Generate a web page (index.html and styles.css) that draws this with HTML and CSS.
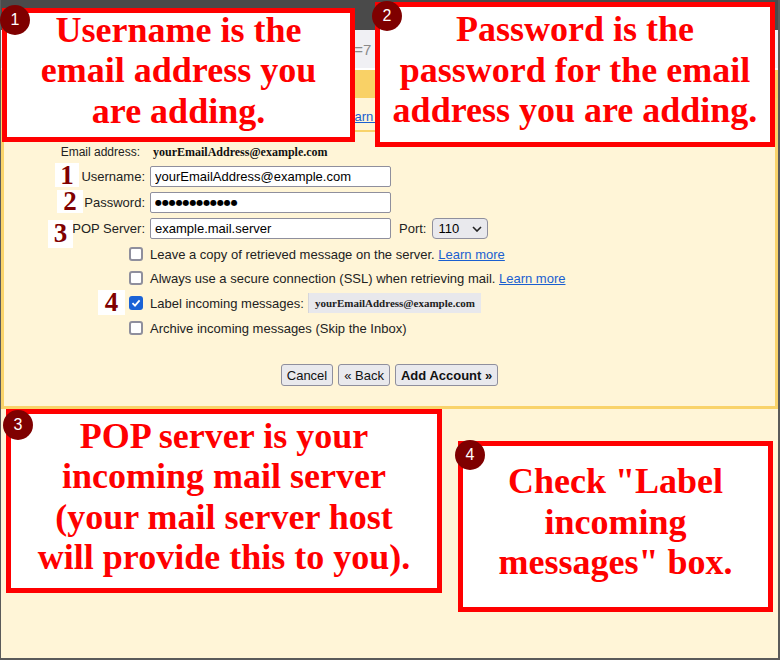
FILE: index.html
```html
<!DOCTYPE html>
<html lang="en">
<head>
<meta charset="utf-8">
<title>Add a mail account - POP settings</title>
<link rel="stylesheet" href="styles.css">
</head>
<body>
<div class="window">
  <div class="topbar"></div>
  <div class="urlbar"><span class="url">t=7</span></div>
  <div class="dialog-head"></div>
  <div class="panel">
    <div class="intro"><a class="link" href="#">Learn more</a></div>
    <div class="form">
      <div class="grid">
        <div class="lbl email-lbl">Email address:</div>
        <div class="email-val">yourEmailAddress@example.com</div>

        <label class="lbl" for="user">Username:</label>
        <div class="ctl"><input id="user" class="field" type="text" value="yourEmailAddress@example.com"></div>

        <label class="lbl" for="pass">Password:</label>
        <div class="ctl"><input id="pass" class="field pw" type="text" value="●●●●●●●●●●●●"></div>

        <label class="lbl" for="pop">POP Server:</label>
        <div class="ctl">
          <input id="pop" class="field" type="text" value="example.mail.server">
          <label class="port-lbl" for="port">Port:</label>
          <span class="sel-wrap">
            <select id="port" class="sel"><option>110</option><option>995</option></select>
            <svg class="chev" width="10" height="6" viewBox="0 0 10 6"><polyline points="1,1 5,5 9,1" fill="none" stroke="#222" stroke-width="1.6"/></svg>
          </span>
        </div>
      </div>

      <div class="opts">
        <div class="opt"><span class="cb"></span><span>Leave a copy of retrieved message on the server. <a class="link" href="#">Learn more</a></span></div>
        <div class="opt"><span class="cb"></span><span>Always use a secure connection (SSL) when retrieving mail. <a class="link" href="#">Learn more</a></span></div>
        <div class="opt opt-label"><span class="cb on"><svg width="10" height="10" viewBox="0 0 10 10"><polyline points="1.5,5.2 4,7.6 8.6,2.4" fill="none" stroke="#fff" stroke-width="1.8"/></svg></span><span>Label incoming messages:</span><span class="chip">yourEmailAddress@example.com</span></div>
        <div class="opt"><span class="cb"></span><span>Archive incoming messages (Skip the Inbox)</span></div>
      </div>

      <div class="actions">
        <button class="btn" type="button">Cancel</button>
        <button class="btn" type="button">« Back</button>
        <button class="btn primary" type="button">Add Account »</button>
      </div>
    </div>
  </div>

  <span class="mk mk1">1</span>
  <span class="mk mk2">2</span>
  <span class="mk mk3">3</span>
  <span class="mk mk4">4</span>

  <div class="callout c1"><p>Username is the<br>email address you<br>are adding.</p></div>
  <div class="callout c2"><p>Password is the<br>password for the email<br>address you are adding.</p></div>
  <div class="callout c3"><p>POP server is your<br>incoming mail server<br>(your mail server host<br>will provide this to you).</p></div>
  <div class="callout c4"><p>Check "Label<br>incoming<br>messages" box.</p></div>

  <span class="badge b1">1</span>
  <span class="badge b2">2</span>
  <span class="badge b3">3</span>
  <span class="badge b4">4</span>
</div>
</body>
</html>
```

FILE: styles.css
```css
html, body {
  margin: 0;
  padding: 0;
}
body {
  width: 780px;
  height: 660px;
  overflow: hidden;
  font-family: "Liberation Sans", Arial, sans-serif;
  color: #222;
}
.window {
  position: relative;
  box-sizing: border-box;
  width: 780px;
  height: 660px;
  border-left: 1px solid #5a5a5a;
  border-right: 2px solid #5a5a5a;
  border-bottom: 2px solid #5a5a5a;
  background: #fff5d7;
  display: flex;
  flex-direction: column;
}
.topbar {
  flex: none;
  height: 30px;
  background: #4a4a4a;
}
.urlbar {
  flex: none;
  height: 38px;
  background: #f0f0f4;
  border-bottom: 2px solid #ffffff;
  display: flex;
  align-items: center;
}
.url {
  padding-left: 349px;
  font-size: 15px;
  color: #8a8a8a;
}
.dialog-head {
  flex: none;
  height: 28px;
  background: #f9d166;
}
.panel {
  flex: none;
  border: 3px solid #f9d36a;
  border-top: none;
  background: #fff5d7;
}
.intro {
  box-sizing: border-box;
  height: 34px;
  padding: 11px 0 0 336px;
  border-bottom: 2px solid #f9d36a;
  font-size: 13px;
  line-height: 16px;
}
.link {
  color: #1a5fd0;
  text-decoration: underline;
}
.form {
  padding: 12px 0 20px;
  font-size: 13px;
}
.grid {
  display: grid;
  grid-template-columns: 141px auto;
  column-gap: 5px;
  row-gap: 5px;
  align-items: center;
}
.lbl {
  text-align: right;
  font-size: 13px;
  color: #222;
  white-space: nowrap;
}
.email-lbl {
  font-size: 12px;
  line-height: 16px;
  padding-right: 5px;
  margin-bottom: 1px;
}
.email-val {
  padding-left: 3px;
  margin-bottom: 1px;
  font-family: "Liberation Serif", "Times New Roman", serif;
  font-weight: bold;
  font-size: 12px;
  line-height: 16px;
  color: #111;
}
.ctl {
  display: flex;
  align-items: center;
}
.field {
  box-sizing: border-box;
  width: 241px;
  height: 21px;
  margin: 0;
  padding: 0 4px;
  border: 1px solid #8f8f9d;
  border-radius: 2px;
  background: #fff;
  font-family: "Liberation Sans", Arial, sans-serif;
  font-size: 13px;
  color: #000;
  outline: none;
}
.pw {
  font-family: "DejaVu Sans", sans-serif;
  font-size: 8px;
  letter-spacing: -0.1px;
}
.port-lbl {
  margin-left: 8px;
  font-size: 13px;
}
.sel-wrap {
  position: relative;
  display: inline-flex;
  margin-left: 6px;
}
.sel {
  appearance: none;
  -webkit-appearance: none;
  box-sizing: border-box;
  width: 56px;
  height: 21px;
  margin: 0;
  padding: 0 0 0 5px;
  border: 1px solid #8f8f9d;
  border-radius: 4px;
  background: #e9e9ed;
  font-family: "Liberation Sans", Arial, sans-serif;
  font-size: 13px;
  color: #000;
}
.chev {
  position: absolute;
  right: 6px;
  top: 8px;
  pointer-events: none;
}
.opts {
  margin-top: 3px;
  padding-left: 125px;
}
.opt {
  height: 24px;
  display: flex;
  align-items: center;
  gap: 7px;
  white-space: nowrap;
}
.opt-label {
  height: 26px;
}
.cb {
  box-sizing: border-box;
  flex: none;
  width: 14px;
  height: 14px;
  border: 2px solid #8f8f9d;
  border-radius: 3px;
  background: #fff;
  display: flex;
  align-items: center;
  justify-content: center;
}
.cb.on {
  border: none;
  background: #1a62d6;
}
.chip {
  margin-left: -3px;
  height: 20px;
  padding: 0 6px;
  display: flex;
  align-items: center;
  background: #e8e8ec;
  border-left: 1px solid #d6d6da;
  font-family: "Liberation Serif", "Times New Roman", serif;
  font-weight: bold;
  font-size: 11px;
  color: #222;
}
.actions {
  margin-top: 24px;
  display: flex;
  justify-content: center;
  gap: 5px;
}
.btn {
  box-sizing: border-box;
  height: 22px;
  margin: 0;
  padding: 0 5px;
  border: 1px solid #8f8f9d;
  border-radius: 3px;
  background: #e9e9ed;
  font-family: "Liberation Sans", Arial, sans-serif;
  font-size: 13px;
  color: #111;
}
.btn.primary {
  font-weight: bold;
}

/* big step numbers placed over the form */
.mk {
  position: absolute;
  display: block;
  background: #fff;
  text-align: center;
  font-family: "Liberation Serif", "Times New Roman", serif;
  font-weight: bold;
  font-size: 27px;
  color: #800000;
}
.mk1 { left: 54px; top: 163px; width: 24px; height: 24px; line-height: 24px; }
.mk2 { left: 56px; top: 190px; width: 26px; height: 23px; line-height: 23px; }
.mk3 { left: 47px; top: 220px; width: 25px; height: 28px; line-height: 26px; }
.mk4 { left: 97px; top: 290px; width: 27px; height: 25px; line-height: 25px; }

/* annotation callouts */
.callout {
  position: absolute;
  box-sizing: border-box;
  border: 5px solid #ff0000;
  background: #fff;
  display: flex;
  align-items: center;
  justify-content: center;
  padding-bottom: 9px;
}
.callout p {
  margin: 0;
  text-align: center;
  font-family: "Liberation Serif", "Times New Roman", serif;
  font-weight: bold;
  font-size: 36px;
  line-height: 40.5px;
  color: #ff0000;
  white-space: nowrap;
}
.c1 { left: 1px; top: 8px; width: 353px; height: 134px; }
.c2 { left: 374px; top: 2px; width: 400px; height: 145px; }
.c3 { left: 5px; top: 409px; width: 436px; height: 184px; }
.c4 { left: 457px; top: 441px; width: 315px; height: 171px; }

.badge {
  position: absolute;
  width: 30px;
  height: 30px;
  border-radius: 50%;
  background: #7f0000;
  color: #fff;
  font-family: "Liberation Sans", Arial, sans-serif;
  font-size: 16px;
  line-height: 30px;
  text-align: center;
}
.b1 { left: -1px; top: 5px; }
.b2 { left: 371px; top: 1px; }
.b3 { left: 2px; top: 410px; }
.b4 { left: 454px; top: 440px; }
```
